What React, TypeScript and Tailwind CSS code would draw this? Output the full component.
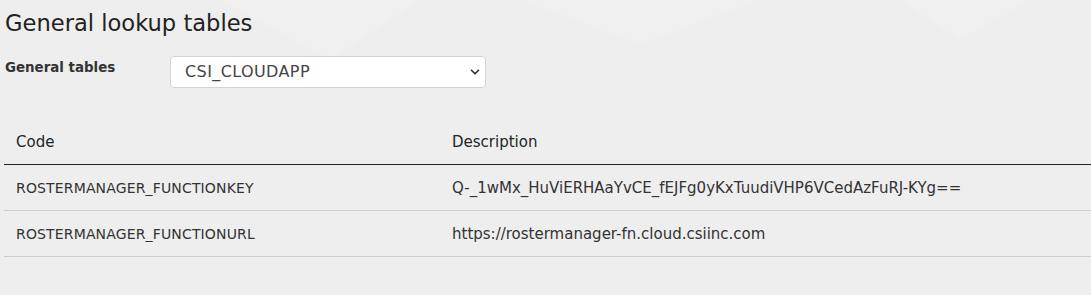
import { ChevronDown } from 'lucide-react';

const rows = [
  { code: 'ROSTERMANAGER_FUNCTIONKEY', description: 'Q-_1wMx_HuViERHAaYvCE_fEJFg0yKxTuudiVHP6VCedAzFuRJ-KYg==' },
  { code: 'ROSTERMANAGER_FUNCTIONURL', description: 'https://rostermanager-fn.cloud.csiinc.com' },
];

export default function App() {
  return (
    <div className="relative w-full h-[295px] overflow-hidden bg-[#eeeeee] font-['DejaVu_Sans',sans-serif] text-[#212529]">
      <svg className="absolute inset-0 w-full h-full" viewBox="0 0 1091 295" preserveAspectRatio="none">
        <polygon points="220,0 420,0 330,60" fill="#ffffff" opacity="0.15" />
        <polygon points="520,0 760,0 640,45" fill="#ffffff" opacity="0.12" />
        <polygon points="900,0 1030,0 960,40" fill="#ffffff" opacity="0.15" />
      </svg>
      <div className="relative">
        <h1 className="pl-[5px] pt-[7px] text-[22.6px] leading-[32px] text-[#222]">General lookup tables</h1>
        <div className="flex items-start mt-[17px]">
          <label className="w-[170px] pl-[5px] pt-[2px] text-[13.4px] leading-[20px] font-semibold text-[#333]">General tables</label>
          <div className="relative w-[316px] h-[32px]">
            <select
              className="appearance-none w-full h-full bg-white border border-[#d4d4d4] rounded-[4px] pl-[14px] pr-8 text-[16px] tracking-[0.4px] text-[#444] outline-none"
              defaultValue="CSI_CLOUDAPP"
            >
              <option>CSI_CLOUDAPP</option>
            </select>
            <ChevronDown className="absolute right-[4px] top-[9px] w-[14px] h-[14px] text-[#333] pointer-events-none" strokeWidth={3} />
          </div>
        </div>
        <table className="ml-[4px] mt-[31px] w-[calc(100%-4px)] border-collapse text-[15px] leading-[21px]">
          <thead>
            <tr className="border-b border-[#222]">
              <th className="w-[436px] px-[12px] pt-[13px] pb-[11px] text-left font-normal text-[#212529]">Code</th>
              <th className="px-[12px] pt-[13px] pb-[11px] text-left font-normal text-[#212529]">Description</th>
            </tr>
          </thead>
          <tbody>
            {rows.map((r) => (
              <tr key={r.code} className="border-b border-[#cfcfcf]">
                <td className="px-[12px] pt-[13px] pb-[11px] text-[14px] tracking-[0.15px] text-[#333]">{r.code}</td>
                <td className="px-[12px] pt-[13px] pb-[11px] text-[#333]">{r.description}</td>
              </tr>
            ))}
          </tbody>
        </table>
      </div>
    </div>
  );
}
